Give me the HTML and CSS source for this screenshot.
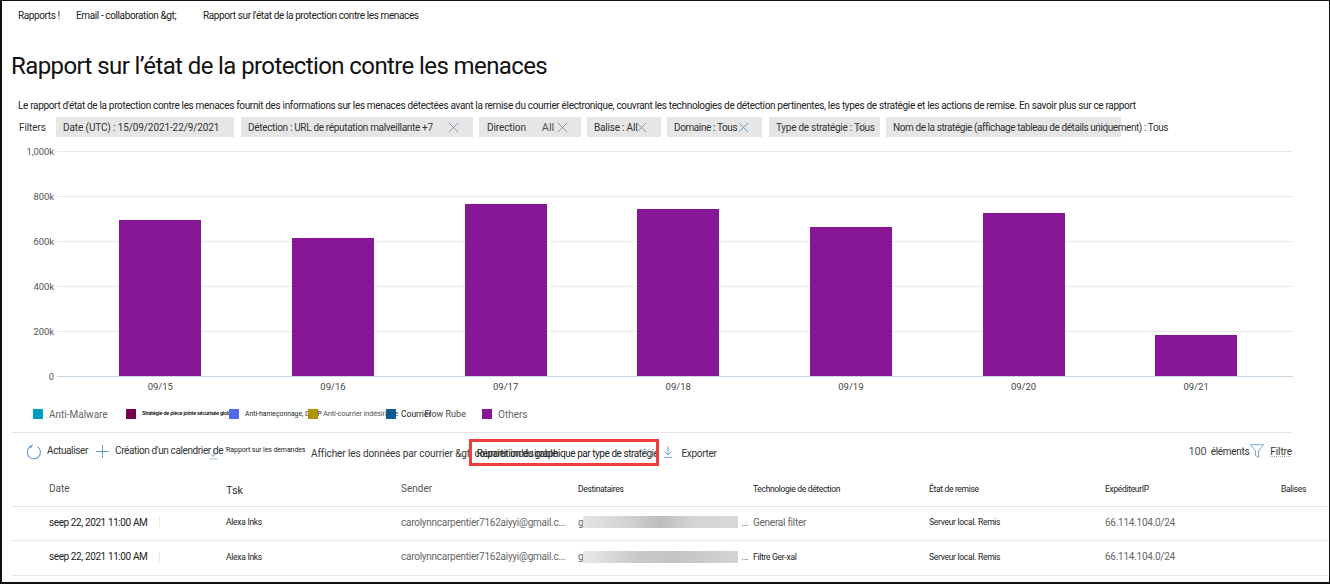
FILE: index.html
```html
<!DOCTYPE html>
<html lang="fr">
<head>
<meta charset="utf-8">
<title>Rapport sur l’état de la protection contre les menaces</title>
<link rel="stylesheet" href="styles.css">
</head>
<body>
<div class="frame">
  <nav class="crumbs">
    <span class="crumb c1">Rapports !</span>
    <span class="crumb c2">Email - collaboration &amp;gt;</span>
    <span class="crumb">Rapport sur l'état de la protection contre les menaces</span>
  </nav>
  <h1 class="title">Rapport sur l’état de la protection contre les menaces</h1>
  <p class="desc">Le rapport d'état de la protection contre les menaces fournit des informations sur les menaces détectées avant la remise du courrier électronique, couvrant les technologies de détection pertinentes, les types de stratégie et les actions de remise. En savoir plus sur ce rapport</p>

  <div class="filters">
    <span class="flabel">Filters</span>
    <div class="pill p1"><span>Date (UTC) : 15/09/2021-22/9/2021</span></div>
    <div class="pill p2"><span>Détection : URL de réputation malveillante +7</span><svg class="x x2" viewBox="0 0 12 12"><path d="M1 1l10 10M11 1L1 11"/></svg></div>
    <div class="pill p3"><span>Direction</span><span class="all">All</span><svg class="x x3" viewBox="0 0 12 12"><path d="M1 1l10 10M11 1L1 11"/></svg></div>
    <div class="pill p4"><span>Balise : All</span><svg class="x x4" viewBox="0 0 12 12"><path d="M1 1l10 10M11 1L1 11"/></svg></div>
    <div class="pill p5"><span>Domaine : Tous</span><svg class="x x5" viewBox="0 0 12 12"><path d="M1 1l10 10M11 1L1 11"/></svg></div>
    <div class="pill p6"><span class="nowrap">Type de stratégie : Tous</span><svg class="x x6" viewBox="0 0 12 12"><path d="M1 1l10 10M11 1L1 11"/></svg></div>
    <div class="pill p7"><span class="nowrap">Nom de la stratégie (affichage tableau de détails uniquement) : Tous</span><svg class="x x7" viewBox="0 0 12 12"><path d="M1 1l10 10M11 1L1 11"/></svg></div>
  </div>

  <section class="chart">
    <div class="grid">
      <div class="gl"><span>1,000k</span><i></i></div>
      <div class="gl"><span>800k</span><i></i></div>
      <div class="gl"><span>600k</span><i></i></div>
      <div class="gl"><span>400k</span><i></i></div>
      <div class="gl"><span>200k</span><i></i></div>
      <div class="gl base"><span>0</span><i></i></div>
    </div>
    <div class="bars">
      <div class="cat"><div class="plot"><div class="bar" style="height:156px"></div></div><span>09/15</span></div>
      <div class="cat"><div class="plot"><div class="bar" style="height:138px"></div></div><span>09/16</span></div>
      <div class="cat"><div class="plot"><div class="bar" style="height:172px"></div></div><span>09/17</span></div>
      <div class="cat"><div class="plot"><div class="bar" style="height:167px"></div></div><span>09/18</span></div>
      <div class="cat"><div class="plot"><div class="bar" style="height:149px"></div></div><span>09/19</span></div>
      <div class="cat"><div class="plot"><div class="bar" style="height:163px"></div></div><span>09/20</span></div>
      <div class="cat"><div class="plot"><div class="bar" style="height:41px"></div></div><span>09/21</span></div>
    </div>
  </section>

  <div class="legend">
    <div class="li l1"><i class="sw teal"></i><span>Anti-Malware</span></div>
    <div class="li l2"><i class="sw wine"></i><span class="tiny">Stratégie de pièce jointe sécurisée globale</span></div>
    <div class="li l3"><i class="sw blue"></i><span class="small">Anti-hameçonnage, GIMP</span></div>
    <div class="li l4"><i class="sw gold"></i><span class="small2">Anti-courrier indésirable</span></div>
    <div class="li l5"><i class="sw navy"></i><span class="dark">Courrier</span><span class="ghost">Flow Rube</span></div>
    <div class="li l6"><i class="sw purple"></i><span>Others</span></div>
  </div>

  <div class="toolbar">
    <div class="tb t1">
      <svg class="ic" viewBox="0 0 16 16"><path d="M10.6 2.200A6.600 6.600 0 1 1 5 2.300M5 .6v2.600H2.400" transform="rotate(8 8 8)"/></svg>
      <span class="stack">Actualiser<em>Refresh</em></span>
    </div>
    <div class="tb t2">
      <svg class="ic plus" viewBox="0 0 14 14"><path d="M7 0v14M0 7h14"/></svg>
      <span class="stack">Création d'un calendrier de<em>Create schedule</em></span>
    </div>
    <div class="tb t3">
      <svg class="ic dl3" viewBox="0 0 12 14"><path d="M6 0v10M2 6.500l4 4 4-4M1 13.500h10"/></svg>
      <span class="micro">'Rapport sur les demandes</span>
    </div>
    <span class="t4">Afficher les données par courrier &amp;gt; courrier indésirable</span>
    <span class="t5">Répartition du graphique par type de stratégie</span>
    <svg class="x x8" viewBox="0 0 12 12"><path d="M1 1l10 10M11 1L1 11"/></svg>
    <div class="tb t6">
      <svg class="ic dl" viewBox="0 0 12 14"><path d="M6 0v10M2 6.500l4 4 4-4M1 13.500h10"/></svg>
      <span>Exporter</span>
    </div>
    <div class="tright">
      <span class="cnt">100</span><span class="el">éléments</span>
      <svg class="funnel" viewBox="0 0 14 14"><path d="M.5.700h13L8.500 7v6.300L5.500 11.500V7z"/></svg>
      <span class="flt">Filtre</span>
    </div>
    <div class="redbox"></div>
  </div>

  <div class="table">
    <div class="row head">
      <span class="h-date">Date</span><span class="h-tsk">Tsk</span><span class="h-send">Sender</span><span class="h-sm">Destinataires</span><span class="h-sm">Technologie de détection</span><span class="h-sm">État de remise</span><span class="h-sm">ExpéditeurIP</span><span class="h-sm">Balises</span>
    </div>
    <div class="row r1">
      <span class="dt">seep 22, 2021 11:00 AM</span><span class="sm">Alexa Inks</span><span class="grey">carolynncarpentier7162aiyyi@gmail.c...</span>
      <span class="rcpt grey">g<i class="blur b1"></i>...</span><span class="grey">General filter</span><span class="sm">Serveur local. Remis</span><span class="grey">66.114.104.0/24</span><span></span>
    </div>
    <div class="row r2">
      <span class="dt">seep 22, 2021 11:00 AM</span><span class="sm">Alexa Inks</span><span class="grey">carolynncarpentier7162aiyyi@gmail.c...</span>
      <span class="rcpt grey">g<i class="blur b2"></i>...</span><span class="sm">Filtre Ger-xal</span><span class="sm">Serveur local. Remis</span><span class="grey">66.114.104.0/24</span><span></span>
    </div>
  </div>
</div>
</body>
</html>
```
FILE: styles.css
```css
* { box-sizing: border-box; }
html, body { margin: 0; padding: 0; background: #fff; }
body { width: 1330px; height: 584px; overflow: hidden; font-family: Roboto, "Liberation Sans", sans-serif; color: #111; }
.frame { width: 1330px; height: 584px; border-left: 2px solid #111; border-right: 1px solid #111; border-top: 1px solid #111; border-bottom: 2px solid #111; overflow: hidden; position: relative; }

.crumbs { display: flex; height: 14px; margin-top: 8px; padding-left: 16px; font-size: 10px; line-height: 14px; letter-spacing: -.39px; color: #222; }
.crumb { white-space: nowrap; }
.c1 { width: 58px; }
.c2 { width: 127px; }

.title { margin: 28px 0 0 9px; font-size: 24px; line-height: 30px; font-weight: 400; letter-spacing: -.6px; color: #111; white-space: nowrap; }

.desc { margin: 18px 0 0 16px; font-size: 10px; line-height: 14px; letter-spacing: -.33px; color: #222; white-space: nowrap; }

.filters { display: flex; align-items: center; height: 20px; margin-top: 4px; padding-left: 17px; font-size: 10px; letter-spacing: -.1px; color: #333; }
.flabel { width: 37px; }
.pill { height: 20px; background: #e6e6e6; display: flex; align-items: center; padding-left: 7px; margin-right: 6px; flex: none; white-space: nowrap; }
.nowrap { white-space: nowrap; }
.p1 { width: 178px; margin-right: 7px; }
.p2 { width: 232px; letter-spacing: -.32px; }
.p3 { width: 102px; padding-left: 8px; }
.p4 { width: 74px; letter-spacing: -.2px; }
.p5 { width: 95px; margin-right: 7px; letter-spacing: -.4px; }
.p6 { width: 111px; letter-spacing: -.27px; }
.p7 { width: 235px; margin-right: 0; letter-spacing: -.42px; }
.all { margin-left: 16px; font-size: 11px; color: #555; }
.x { width: 11px; height: 11px; flex: none; fill: none; stroke: #5a7fa6; stroke-width: .8; }
.x2 { margin-left: 15px; }
.x3 { margin-left: 3px; }
.x4 { margin-left: -1px; }
.x5 { margin-left: 1px; }
.x6 { margin-left: -20px; }
.x7 { margin-left: -71px; }

.chart { position: relative; height: 250px; margin-top: 4px; }
.grid { display: flex; flex-direction: column; gap: 34px; padding-top: 5px; }
.gl { display: flex; align-items: center; height: 11px; font-size: 9.500px; color: #555; }
.gl span { width: 52px; text-align: right; letter-spacing: -.1px; flex: none; }
.gl i { display: block; height: 1px; width: 1236px; margin-left: 3px; background: #eaeaea; }
.gl.base i { background: #c9d6e4; }
.bars { position: absolute; left: 72px; top: 10px; display: flex; width: 1208.500px; }
.cat { flex: 1; display: flex; flex-direction: column; align-items: center; }
.plot { height: 225px; display: flex; align-items: flex-end; }
.bar { width: 82px; background: #881798; }
.cat span { font-size: 9.500px; color: #444; margin-top: 5px; line-height: 12px; }

.legend { display: flex; align-items: center; height: 14px; margin-top: 16px; font-size: 10px; color: #666; }
.li { display: flex; align-items: center; flex: none; white-space: nowrap; }
.sw { display: block; width: 10px; height: 10px; margin-right: 6px; flex: none; }
.teal { background: #009ec1; }
.wine { background: #7a0052; }
.blue { background: #4f6bed; }
.gold { background: #b39200; }
.navy { background: #004e8c; position: relative; z-index: 1; opacity: .92; }
.purple { background: #881798; }
.l1 { width: 93px; margin-left: 31px; }
.l2 { width: 103px; }
.l3 .sw { position: relative; }
.tiny { font-size: 5.500px; color: #000; letter-spacing: -.22px; margin-top: -3px; font-weight: 500; }
.l3 { width: 79px; }
.small { font-size: 6.800px; color: #222; }
.small2 { font-size: 7.500px; color: #555; letter-spacing: -.17px; margin-top: -1px; }
.l4 { width: 78px; }
.l4 .sw { margin-right: 5px; }
.l5 { width: 96px; }
.l5 .sw { margin-right: 5px; }
.dark { font-size: 8.500px; color: #222; }
.ghost { margin-left: -7px; font-size: 9px; color: #444; }

.toolbar { position: relative; display: flex; align-items: center; height: 38px; margin: 11px 37px 0 9px; border-top: 1px solid #e5e5e5; font-size: 10px; color: #333; letter-spacing: -.1px; white-space: nowrap; }
.tb { display: flex; align-items: center; flex: none; }
.ic { fill: none; stroke: #5b93c9; stroke-width: 1; flex: none; }
.t1 { margin-left: 15px; width: 70px; }
.t1 .ic { width: 16px; height: 16px; margin-right: 5px; }
.t2 { width: 115px; }
.plus { width: 13px; height: 13px; margin-right: 6px; }
.stack { position: relative; line-height: 12px; margin-top: -2px; letter-spacing: -.38px; }
.stack em { position: absolute; left: 0; top: 4px; font-style: normal; color: #999; z-index: -1; letter-spacing: .1px; }
.t3 { width: 0; margin-left: -2px; }
.dl3 { width: 9px; height: 14px; margin-right: 7px; stroke-width: .8; margin-top: 5px; }
.micro { font-size: 7px; letter-spacing: -.1px; color: #222; margin-top: -3px; }
.t4 { margin-left: 102px; margin-top: 4px; flex: none; }
.t5 { margin-left: -81px; margin-top: 4px; color: #222; flex: none; letter-spacing: -.45px; }
.x8 { width: 10px; height: 10px; margin-left: -18px; margin-top: 3px; stroke: #888; }
.t6 { margin-left: 13px; }
.dl { width: 10px; height: 14px; margin-right: 8px; }
.t6 span { margin-top: 4px; letter-spacing: -.3px; }
.tright { margin-left: auto; display: flex; align-items: center; flex: none; margin-top: -1px; }
.cnt { font-size: 11px; color: #555; }
.el { margin-left: 4px; letter-spacing: -.3px; }
.funnel { width: 14px; height: 14px; margin-left: 1px; fill: none; stroke: #5b93c9; stroke-width: .8; }
.flt { margin-left: 6px; text-decoration: underline dotted #aaa; }
.redbox { position: absolute; left: 458px; top: 6px; width: 190px; height: 27px; border: 3px solid #ef3b3b; }

.table { margin: 2px 0 0 9px; }
.row { display: grid; grid-template-columns: 177px 175px 177px 175px 176px 176px 176px 60px; padding: 0 0 3px 38px; height: 35px; align-items: center; border-bottom: 1px solid #e8e8e8; font-size: 10px; white-space: nowrap; }
.row.head { padding-bottom: 2px; }
.row.r1 { height: 34px; }
.h-date, .h-send { color: #555; }
.h-tsk { font-size: 11px; color: #333; margin-top: 4px; }
.h-sm { font-size: 8.500px; color: #222; letter-spacing: -.33px; margin-top: 1px; }
.dt { display: flex; align-items: center; letter-spacing: -.4px; color: #222; }
.dt::after { content: ""; display: block; width: 1px; height: 10px; margin-left: 12px; background: #e8e8e8; }
.sm { font-size: 8.500px; color: #222; letter-spacing: -.28px; }
.grey { color: #666; letter-spacing: -.26px; }
.rcpt { display: flex; align-items: center; }
.blur { display: block; width: 155px; height: 12px; margin: 0 3px 0 0; }
.b1 { background: linear-gradient(90deg, #e4e4e4 0, #d2d2d2 30%, #bdbdbd 50%, #d4d4d4 70%, #d8d8d8 100%); }
.b2 { background: linear-gradient(90deg, #e8e8e8 0, #c9c9c9 35%, #c4c4c4 60%, #d4d4d4 100%); }
```
